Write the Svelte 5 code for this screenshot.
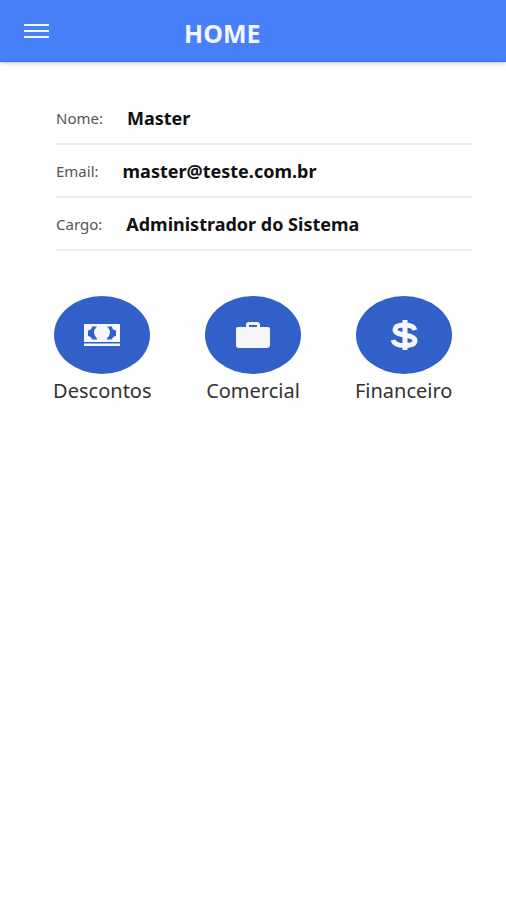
<script lang="ts">
  const profile = [
    { label: "Nome:", value: "Master" },
    { label: "Email:", value: "master@teste.com.br" },
    { label: "Cargo:", value: "Administrador do Sistema" },
  ];

  const shortcuts = [
    { id: "descontos", title: "Descontos" },
    { id: "comercial", title: "Comercial" },
    { id: "financeiro", title: "Financeiro" },
  ];
</script>

<header class="toolbar">
  <button class="menu-toggle" type="button" aria-label="Menu">
    <svg viewBox="0 0 26 16" width="26" height="16" fill="currentColor">
      <rect x="0" y="1" width="25" height="2" />
      <rect x="0" y="7" width="25" height="2" />
      <rect x="0" y="13" width="25" height="2" />
    </svg>
  </button>
  <h1>HOME</h1>
</header>

<main>
  <dl class="profile">
    {#each profile as item}
      <div class="profile-row">
        <dt>{item.label}</dt>
        <dd>{item.value}</dd>
      </div>
    {/each}
  </dl>

  <nav class="shortcuts">
    {#each shortcuts as shortcut (shortcut.id)}
      <button class="shortcut" type="button">
        <span class="shortcut-icon">
          {#if shortcut.id === "descontos"}
            <svg viewBox="0 0 38 24" width="38" height="24">
              <rect x="1" y="1" width="36" height="18" fill="#f5f7fc" />
              <path
                d="M9 3.5h5v13H9c0-2-1.500-3-4-3.500V7.500C7.500 7 9 6 9 3.500zM29 3.500h-5v13h5c0-2 1.500-3 4-3.500V7.500c-2.500-.5-4-1.500-4-4z"
                fill="#3060c8"
              />
              <ellipse cx="19" cy="9.500" rx="8" ry="7.500" fill="#f5f7fc" />
              <rect x="1" y="20.500" width="36" height="2.500" fill="#f5f7fc" />
            </svg>
          {:else if shortcut.id === "comercial"}
            <svg viewBox="0 0 36 28" width="36" height="28" fill="#f5f5f7">
              <path
                fill-rule="evenodd"
                d="M3 6h8V4c0-2 1-3 3-3h8c2 0 3 1 3 3v2h8c1.500 0 2 .7 2 2v16c0 2-1 3-3 3H4c-2 0-3-1-3-3V8c0-1.300.5-2 2-2zM14 6h8V4h-8z"
              />
            </svg>
          {:else}
            <svg
              viewBox="0 0 30 32"
              width="30"
              height="32"
              fill="none"
              stroke="#f5f7fc"
              stroke-width="5"
            >
              <path
                d="M26 11C25 7.500 21 6 15.500 6C9.500 6 6 7.500 6 10.500C6 14 10 15 15.500 16C22 17 26 18.500 26 21.500C26 25 21.500 26.500 15.500 26.500C9 26.500 5 25 4 21"
              />
              <path d="M16 1v30" />
            </svg>
          {/if}
        </span>
        <span class="shortcut-title">{shortcut.title}</span>
      </button>
    {/each}
  </nav>
</main>

<style>
  :global(body) {
    margin: 0;
    background: #fefefe;
    font-family: "Noto Sans", "Open Sans", sans-serif;
  }

  button {
    padding: 0;
    border: none;
    background: transparent;
    font: inherit;
    color: inherit;
    cursor: pointer;
  }

  .toolbar {
    display: grid;
    grid-template-columns: 160px 1fr;
    align-items: center;
    box-sizing: border-box;
    height: 62px;
    padding: 0 24px;
    background: #4880fa;
    border-bottom: 1px solid #2f6fec;
    box-shadow: 0 1px 4px rgba(0, 0, 0, 0.25);
    color: #f2f5ff;
  }

  .menu-toggle {
    display: flex;
    justify-self: start;
  }

  .toolbar h1 {
    margin: 0;
    padding-top: 4px;
    font-size: 25px;
    line-height: 32px;
    font-weight: 700;
  }

  .profile {
    margin: 30px 34px 0 56px;
  }

  .profile-row {
    display: flex;
    align-items: center;
    gap: 24px;
    box-sizing: border-box;
    height: 53px;
    border-bottom: 2px solid #ebebeb;
  }

  dt {
    font-size: 15px;
    color: #555;
  }

  dd {
    margin: 0;
    font-size: 18px;
    font-weight: 700;
    color: #111;
  }

  .shortcuts {
    display: grid;
    grid-template-columns: repeat(3, 1fr);
    margin: 45px 27px 0;
  }

  .shortcut {
    display: flex;
    flex-direction: column;
    align-items: center;
    gap: 3px;
  }

  .shortcut-icon {
    display: flex;
    align-items: center;
    justify-content: center;
    width: 96px;
    height: 78px;
    border-radius: 50%;
    background: #3060c8;
  }

  .shortcut-title {
    font-size: 20px;
    line-height: 28px;
    color: #333;
  }
</style>
